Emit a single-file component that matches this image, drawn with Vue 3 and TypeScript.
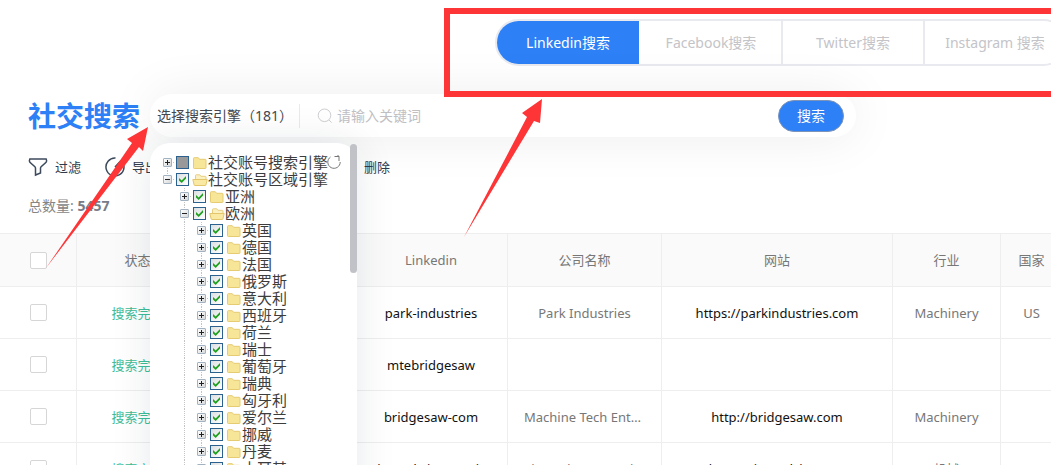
<script setup lang="ts">
import { ref } from 'vue'

interface TreeNode {
  label: string
  level: number
  open?: boolean
  partial?: boolean
  first?: boolean
  last?: boolean
}

interface Row {
  linkedin: string
  company: string
  site: string
  industry: string
  country: string
}

const tabs: string[] = ['Linkedin搜索', 'Facebook搜索', 'Twitter搜索', 'Instagram 搜索']
const activeTab = ref<number>(0)
const keyword = ref<string>('')

const countries: string[] = [
  '英国', '德国', '法国', '俄罗斯', '意大利', '西班牙', '荷兰', '瑞士',
  '葡萄牙', '瑞典', '匈牙利', '爱尔兰', '挪威', '丹麦', '土耳其',
]

const nodes: TreeNode[] = [
  { label: '社交账号搜索引擎', level: 0, partial: true, first: true },
  { label: '社交账号区域引擎', level: 0, open: true, last: true },
  { label: '亚洲', level: 1 },
  { label: '欧洲', level: 1, open: true },
  ...countries.map((label) => ({ label, level: 2 })),
]

const rows: Row[] = [
  { linkedin: 'park-industries', company: 'Park Industries', site: 'https://parkindustries.com', industry: 'Machinery', country: 'US' },
  { linkedin: 'mtebridgesaw', company: '', site: '', industry: '', country: '' },
  { linkedin: 'bridgesaw-com', company: 'Machine Tech Enterprises', site: 'http://bridgesaw.com', industry: 'Machinery', country: '' },
  { linkedin: 'simonds-international', company: 'Simonds International', site: 'http://simondsint.com', industry: '机械', country: 'US' },
]
</script>

<template>
  <main class="page">
    <header class="top">
      <nav class="tabs" aria-label="搜索平台">
        <button
          v-for="(tab, i) in tabs"
          :key="tab"
          type="button"
          class="tab"
          :class="{ active: i === activeTab }"
          @click="activeTab = i"
        >{{ tab }}</button>
      </nav>
    </header>

    <section class="search-row">
      <h1 class="title">社交搜索</h1>
      <div class="search-area">
        <form class="search" @submit.prevent>
          <button type="button" class="engine">选择搜索引擎（181）</button>
          <svg class="lens" viewBox="0 0 16 16" aria-hidden="true">
            <circle cx="7.5" cy="7.3" r="6.3" />
            <path d="M12 12l2.6 2.6" />
          </svg>
          <input v-model="keyword" class="keyword" type="text" placeholder="请输入关键词" aria-label="关键词" />
          <button type="submit" class="go">搜索</button>
        </form>

        <div class="panel">
          <ul class="tree">
            <li v-for="node in nodes" :key="node.label" class="node">
              <span v-if="node.level > 0" class="guide"></span>
              <span v-if="node.level > 1" class="guide dotted"></span>
              <button
                type="button"
                class="switch"
                :class="{ open: node.open, first: node.first, last: node.last }"
                :aria-label="(node.open ? '收起' : '展开') + node.label"
              ></button>
              <label class="entry">
                <input type="checkbox" class="tick" :class="{ partial: node.partial }" :checked="!node.partial" />
                <svg class="folder" viewBox="0 0 16 16" aria-hidden="true">
                  <template v-if="node.open">
                    <path d="M3.5 8V3.6q0-.8.8-.8h3.4l1.2 1.5h4.3q.8 0 .8.8V8z" fill="#fbf1c0" stroke="#e6cd80" />
                    <path d="M.8 7.5h14.4l-1.3 5.6q-.1.4-.6.4H2.8q-.5 0-.6-.4z" fill="#f9e9a2" stroke="#e3c66c" />
                  </template>
                  <path v-else d="M1.500 12.800V3.500q0-.8.8-.8h4l1.300 1.600h5.600q.8 0 .8.8v7.700q0 .7-.8.7H2.300q-.8 0-.8-.7z" fill="#f8e698" stroke="#e5cb72" />
                </svg>
                <span>{{ node.label }}</span>
              </label>
            </li>
          </ul>
          <button type="button" class="refresh" aria-label="刷新">
            <svg viewBox="0 0 16 16" aria-hidden="true">
              <path d="M4.500 3A6.200 6.200 0 1 0 14.200 8" />
              <path d="M8.500 2.500h4.500V7M13 2.500l-1.500-1.500" />
            </svg>
          </button>
          <span class="thumb"></span>
        </div>
      </div>
    </section>

    <section class="tools">
      <button type="button" class="tool">
        <svg viewBox="0 0 20 20" aria-hidden="true">
          <path d="M1.8 2h16.4q.9 1.9-.1 3.2l-5 4.6q-.6.6-.6 1.4v4.7l-5 2.1v-6.8q0-.8-.6-1.4l-5-4.6q-1-1.3-.1-3.2z" />
        </svg>
        <span>过滤</span>
      </button>
      <button type="button" class="tool">
        <svg viewBox="0 0 20 20" aria-hidden="true">
          <path d="M10.5 1A9 9 0 1 0 16 3.3M10 10l6-6.500" />
        </svg>
        <span>导出</span>
      </button>
      <button type="button" class="tool remove"><span>删除</span></button>
    </section>

    <p class="total">总数量: <strong>5457</strong></p>

    <table class="grid">
      <colgroup>
        <col class="c-pick" />
        <col class="c-state" />
        <col class="c-time" />
        <col class="c-link" />
        <col class="c-firm" />
        <col />
        <col class="c-trade" />
        <col class="c-land" />
      </colgroup>
      <thead>
        <tr>
          <th><input type="checkbox" class="pick" aria-label="全选" /></th>
          <th>状态</th>
          <th></th>
          <th>Linkedin</th>
          <th>公司名称</th>
          <th>网站</th>
          <th>行业</th>
          <th>国家</th>
        </tr>
      </thead>
      <tbody>
        <tr v-for="row in rows" :key="row.linkedin">
          <td><input type="checkbox" class="pick" :aria-label="row.linkedin" /></td>
          <td class="done">搜索完成</td>
          <td></td>
          <td><a class="link" href="#">{{ row.linkedin }}</a></td>
          <td>{{ row.company }}</td>
          <td><a v-if="row.site" class="link" href="#">{{ row.site }}</a></td>
          <td>{{ row.industry }}</td>
          <td>{{ row.country }}</td>
        </tr>
      </tbody>
    </table>

    <div class="mark"></div>
    <svg class="arrows" width="560" height="280" viewBox="0 0 560 280" aria-hidden="true">
      <path d="M46 268L132 143 127 139 148 127 143 151 139 147z" />
      <path d="M464 237L527 117 522 113 542 99 540 123 534 121z" />
    </svg>
  </main>
</template>

<style>
body {
  margin: 0;
  background: #fff;
}
</style>

<style scoped>
.page {
  position: relative;
  height: 100vh;
  overflow: hidden;
  background: #fff;
  color: #777;
  font: 14px/20px "Noto Sans", "Noto Sans CJK SC", sans-serif;
}

button,
input {
  font: inherit;
}

button {
  padding: 0;
  border: 0;
  background: none;
  color: inherit;
  white-space: nowrap;
}

.top {
  display: flex;
  justify-content: flex-end;
  padding-top: 19px;
}

.tabs {
  display: grid;
  grid-template-columns: repeat(4, 1fr);
  width: 572px;
  margin-right: -16px;
  box-sizing: border-box;
  flex: none;
  border: 2px solid #e9e9f0;
  border-radius: 24px;
  overflow: hidden;
  position: relative;
  z-index: 1;
  background: #fff;
}

.tab {
  height: 43px;
  color: #c4c4c8;
}

.tab + .tab {
  border-left: 2px solid #e9e9f0;
}

.tab.active {
  background: #2d80f5;
  color: #fff;
}

.tab.active + .tab {
  border-left-color: #fff;
}

.search-row {
  display: flex;
  align-items: center;
  gap: 10px;
  padding: 28px 0 0 28px;
}

.title {
  margin: 0;
  color: #2d80f5;
  font-size: 28px;
  line-height: 40px;
  font-weight: 700;
  white-space: nowrap;
}

.search-area {
  position: relative;
  z-index: 2;
  flex: 0 1 706px;
}

.search {
  display: flex;
  align-items: center;
  height: 43px;
  padding: 0 12px 0 7px;
  border-radius: 22px;
  background: #fff;
  box-shadow: 0 0 50px rgba(0, 0, 0, 0.08);
}

.engine {
  width: 143px;
  height: 24px;
  border-right: 1px solid #e9e9f0;
  color: #44484f;
  text-align: left;
}

.lens {
  width: 16px;
  height: 16px;
  margin: 0 4px 0 17px;
  fill: none;
  stroke: #cfcfd3;
}

.keyword {
  flex: 1;
  min-width: 0;
  padding: 0;
  border: 0;
  outline: 0;
  background: none;
  color: #44484f;
}

.keyword::placeholder {
  color: #c0c0c4;
}

.go {
  width: 66px;
  height: 32px;
  border: 1px solid #7d93b8;
  border-radius: 16px;
  background: #2d80f5;
  color: #fff;
}

.panel {
  position: absolute;
  top: 49px;
  left: 0;
  width: 207px;
  height: 400px;
  border-radius: 20px 20px 0 0;
  background: #fff;
  box-shadow: 0 0 40px rgba(20, 40, 60, 0.1);
}

.tree {
  margin: 0;
  padding: 11px 0 0 8px;
  list-style: none;
  color: #3d3d3d;
  font-size: 15px;
  line-height: 17px;
}

.node,
.entry {
  display: flex;
  align-items: center;
  height: 17px;
  white-space: nowrap;
}

.guide {
  width: 17px;
  height: 17px;
}

.guide.dotted {
  background: repeating-linear-gradient(#c4c4c4 0 1px, transparent 1px 2px) 9px 0 / 1px 17px no-repeat;
}

.switch {
  position: relative;
  width: 18px;
  height: 17px;
  background:
    repeating-linear-gradient(#c4c4c4 0 1px, transparent 1px 2px) 9px 0 / 1px 17px no-repeat,
    repeating-linear-gradient(90deg, #c4c4c4 0 1px, transparent 1px 2px) 9px 8px / 8px 1px no-repeat;
}

.switch.first {
  background-position: 9px 8px, 9px 8px;
}

.switch.last {
  background-size: 1px 8px, 8px 1px;
}

.switch::before {
  content: "";
  position: absolute;
  top: 4px;
  left: 5px;
  width: 7px;
  height: 7px;
  border: 1px solid #a3b2c0;
  border-radius: 1px;
  background:
    linear-gradient(#222, #222) 1px 3px / 5px 1px no-repeat,
    linear-gradient(#222, #222) 3px 1px / 1px 5px no-repeat,
    linear-gradient(135deg, #fff, #d5d8da);
}

.switch.open::before {
  background:
    linear-gradient(#222, #222) 1px 3px / 5px 1px no-repeat,
    linear-gradient(135deg, #fff, #d5d8da);
}

.tick {
  appearance: none;
  position: relative;
  width: 13px;
  height: 13px;
  margin: 0;
  border: 1px solid #2b618e;
  background: linear-gradient(135deg, #dcdfe0, #fff);
}

.tick:checked::after {
  content: "";
  position: absolute;
  top: 2px;
  left: 2px;
  width: 7px;
  height: 7px;
  background: #1fa01f;
  clip-path: polygon(0 30%, 38% 64%, 100% 0, 100% 36%, 38% 100%, 0 66%);
}

.tick.partial {
  background: #999;
}

.folder {
  width: 16px;
  height: 16px;
  margin-left: 3px;
}

.refresh {
  position: absolute;
  top: 11px;
  left: 176px;
  width: 16px;
  height: 16px;
}

.refresh svg {
  display: block;
  fill: none;
  stroke: #777;
}

.thumb {
  position: absolute;
  top: 1px;
  right: 0;
  width: 7px;
  height: 129px;
  border-radius: 4px;
  background: #c1c2c7;
}

.tools {
  display: flex;
  gap: 24px;
  padding: 20px 0 0 28px;
  color: #2f3b4c;
  font-size: 13px;
}

.tool {
  display: flex;
  align-items: center;
  gap: 7px;
}

.tool svg {
  width: 20px;
  height: 20px;
  fill: none;
  stroke: #3c4a5c;
  stroke-width: 1.5;
}

.tool.remove {
  margin-left: 182px;
}

.total {
  margin: 0;
  padding: 19px 0 17px 28px;
  color: #858585;
}

.total strong {
  color: #777c88;
}

.grid {
  width: calc(100% + 12px);
  border-collapse: separate;
  border-spacing: 0;
  table-layout: fixed;
  border-top: 1px solid #eee;
  font-size: 13px;
}

.c-pick { width: 77px; }
.c-state { width: 122px; }
.c-time { width: 156px; }
.c-link { width: 153px; }
.c-firm { width: 154px; }
.c-trade { width: 108px; }
.c-land { width: 62px; }

.grid th,
.grid td {
  box-sizing: border-box;
  height: 52px;
  padding: 0 16px;
  border-right: 1px solid #eee;
  border-bottom: 1px solid #eee;
  text-align: center;
  font-weight: 400;
  overflow: hidden;
  text-overflow: ellipsis;
  white-space: nowrap;
}

.grid th {
  height: 53px;
  background: #fafafa;
}

.grid .done {
  color: #3dbd99;
}

.grid th:last-child,
.grid td:last-child {
  padding: 0 8px;
}

.link {
  color: #111;
  text-decoration: none;
}

.pick {
  appearance: none;
  display: block;
  width: 17px;
  height: 17px;
  margin: 0 auto;
  border: 1px solid #d6d6d6;
  border-radius: 2px;
  background: #fff;
}

.mark {
  position: absolute;
  z-index: 3;
  top: 8px;
  right: -6px;
  left: 444px;
  height: 77px;
  border: 6px solid #fd3537;
}

.arrows {
  position: absolute;
  z-index: 3;
  top: 0;
  left: 0;
  fill: #fd3537;
  pointer-events: none;
}
</style>
